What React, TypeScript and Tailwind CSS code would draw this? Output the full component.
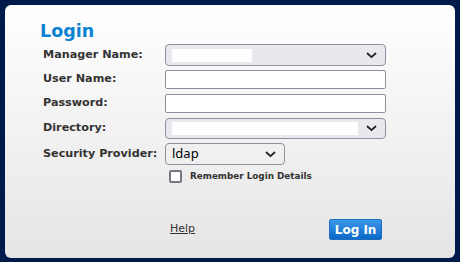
import React from 'react';

const Chevron = () => (
  <svg width="11" height="7" viewBox="0 0 11 7" className="shrink-0">
    <path d="M1.5 1.5 L5.5 5.2 L9.5 1.5" fill="none" stroke="#222" strokeWidth="1.8" strokeLinecap="round" strokeLinejoin="round" />
  </svg>
);

// redacted select values show up as white smudges
const Smudge = ({ w }: { w: number }) => (
  <div className="h-[13px] bg-white" style={{ width: w }} />
);

function Row({ label, children, className = '' }: { label: string; children: React.ReactNode; className?: string }) {
  return (
    <div className={`flex items-center ${className}`}>
      <div className="w-[122px] shrink-0 text-[11.2px] font-bold text-[#333]">{label}</div>
      {children}
    </div>
  );
}

export default function App() {
  return (
    <div className="w-[460px] h-[262px] bg-[#011a4c] p-[5px] font-['DejaVu_Sans',Verdana,sans-serif]">
      <div className="relative h-[253px] w-[450px] rounded-[6px] bg-gradient-to-b from-white to-[#e5e5e5] pl-[35px] pt-[14px]">
        <h1 className="text-[17.5px] font-bold leading-[24px] text-[#0a82d2]">Login</h1>

        <div className="mt-[1px] pl-[3px]">
          <Row label="Manager Name:" className="h-[22px]">
            <div className="flex h-[22px] w-[221px] items-center justify-between rounded-[4px] border border-[#8f8f9d] bg-[#e9e9ed] pl-[6px] pr-[8px]">
              <Smudge w={80} />
              <Chevron />
            </div>
          </Row>
          <Row label="User Name:" className="mt-[4px] h-[19px]">
            <div className="h-[19px] w-[221px] rounded-[2px] border border-[#8f8f9d] bg-white" />
          </Row>
          <Row label="Password:" className="mt-[5px] h-[19px]">
            <div className="h-[19px] w-[221px] rounded-[2px] border border-[#8f8f9d] bg-white" />
          </Row>
          <Row label="Directory:" className="mt-[5px] h-[21px]">
            <div className="flex h-[21px] w-[221px] items-center justify-between rounded-[4px] border border-[#8f8f9d] bg-[#e9e9ed] pl-[6px] pr-[8px]">
              <Smudge w={186} />
              <Chevron />
            </div>
          </Row>
          <Row label="Security Provider:" className="mt-[4px] h-[22px]">
            <div className="flex h-[22px] w-[120px] items-center justify-between rounded-[4px] border border-[#8f8f9d] bg-[#f0f0f0] pl-[6px] pr-[8px]">
              <span className="font-['Noto_Sans',sans-serif] text-[13px] text-black">ldap</span>
              <Chevron />
            </div>
          </Row>
          <div className="mt-[5px] flex items-center pl-[126px]">
            <div className="h-[13px] w-[13px] rounded-[2px] border-2 border-[#77767e] bg-white" />
            <span className="ml-[8px] text-[8.8px] font-bold text-[#333]">Remember Login Details</span>
          </div>
        </div>

        <div className="mt-[36px] flex items-center pl-[130px]">
          <a className="text-[11px] text-[#333] underline">Help</a>
          <button className="ml-[134px] h-[21px] w-[53px] rounded-[2px] border border-[#1c6fc0] bg-gradient-to-b from-[#3a98e8] to-[#0a68c8] text-[12px] font-bold text-white">
            Log In
          </button>
        </div>
      </div>
    </div>
  );
}
